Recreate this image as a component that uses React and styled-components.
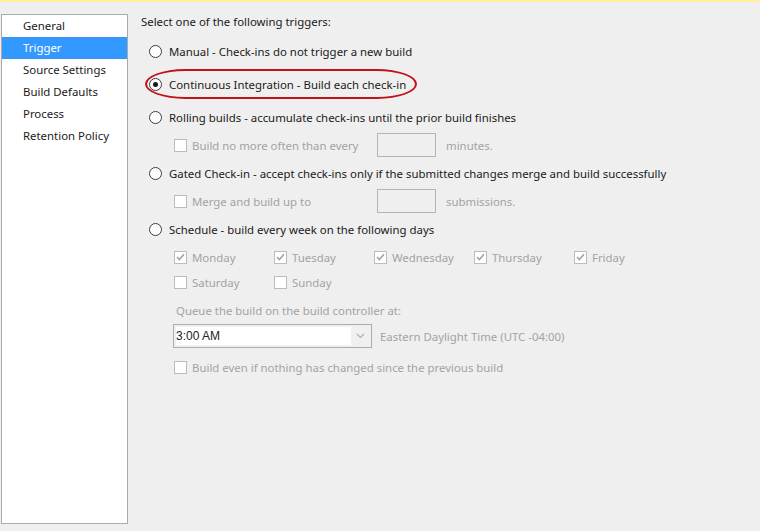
import React from "react";
import styled, { createGlobalStyle } from "styled-components";

const Global = createGlobalStyle`
  html, body { margin: 0; padding: 0; background: #efefef; }
  body { font-family: "Noto Sans", "Open Sans", sans-serif; font-size: 11.4px; color: #1a1a1a; }
  #root { width: 760px; height: 531px; overflow: hidden; }
`;

const Page = styled.div`
  width: 760px;
  height: 531px;
  display: flex;
  flex-direction: column;
  background: #efefef;
`;

const TopStrip = styled.div`
  height: 2px;
  background: #fff0a0;
`;

const Body = styled.div`
  display: flex;
  padding: 12px 0 0 1px;
  gap: 13px;
`;

const Nav = styled.ul`
  list-style: none;
  margin: 0;
  padding: 0;
  width: 125px;
  height: 508px;
  background: #fff;
  border: 1px solid #ababab;
`;

const NavItem = styled.li`
  height: 22px;
  line-height: 22px;
  padding-left: 21px;
  background: ${(p) => (p.$active ? "#3399ff" : "transparent")};
  color: ${(p) => (p.$active ? "#fff" : "#1a1a1a")};
`;

const Content = styled.div`
  display: flex;
  flex-direction: column;
`;

const Heading = styled.div`
  height: 16px;
  line-height: 16px;
`;

const Row = styled.div`
  position: relative;
  display: flex;
  align-items: center;
  height: ${(p) => p.$h || 22}px;
  margin-top: ${(p) => p.$mt || 0}px;
  padding-left: ${(p) => p.$indent || 0}px;
  color: ${(p) => (p.$disabled ? "#a3a3a3" : "#1a1a1a")};
  white-space: nowrap;
`;

const Radio = styled.span`
  box-sizing: border-box;
  width: 13px;
  height: 13px;
  border-radius: 50%;
  border: 1px solid #3c3c3c;
  background: #fff;
  margin-right: 7px;
  display: inline-flex;
  align-items: center;
  justify-content: center;
  flex: none;
  &::after {
    content: "";
    display: ${(p) => (p.$checked ? "block" : "none")};
    width: 5px;
    height: 5px;
    border-radius: 50%;
    background: #1a1a1a;
  }
`;

const Box = styled.span`
  box-sizing: border-box;
  width: 13px;
  height: 13px;
  border: 1px solid #bcbcbc;
  background: #fff;
  margin-right: 5px;
  flex: none;
  display: inline-flex;
  align-items: center;
  justify-content: center;
`;

const Highlight = styled.span`
  position: absolute;
  left: 4px;
  top: -4px;
  width: 272px;
  height: 30px;
  box-sizing: border-box;
  border: 2px solid #c1121c;
  border-radius: 40px / 15px;
  pointer-events: none;
`;

const NumInput = styled.span`
  box-sizing: border-box;
  width: 59px;
  height: 24px;
  border: 1px solid #b4b4b4;
  background: #efefef;
  flex: none;
`;

const Label = styled.span`
  width: ${(p) => (p.$w ? `${p.$w}px` : "auto")};
  flex: none;
  margin-left: ${(p) => p.$ml || 0}px;
`;

const Day = styled.span`
  display: flex;
  align-items: center;
  width: 100px;
`;

const Select = styled.div`
  box-sizing: border-box;
  width: 199px;
  height: 24px;
  border: 1px solid #acacac;
  background: #f0f0f0;
  display: flex;
  align-items: center;
  padding: 2px;
  margin-right: 8px;
`;

const SelectValue = styled.span`
  flex: 1;
  height: 100%;
  background: #fff;
  color: #222;
  font-family: "Liberation Sans", Arial, sans-serif;
  font-size: 12px;
  line-height: 18px;
`;

const Arrow = styled.span`
  width: 18px;
  display: flex;
  justify-content: center;
`;

const Check = () => (
  <svg width="9" height="8" viewBox="0 0 9 8">
    <path d="M1 4.2 L3.4 6.5 L8 1.2" fill="none" stroke="#a5a5a5" strokeWidth="1.6" />
  </svg>
);

const days1 = ["Monday", "Tuesday", "Wednesday", "Thursday", "Friday"];
const days2 = ["Saturday", "Sunday"];

export default function App() {
  return (
    <Page>
      <Global />
      <TopStrip />
      <Body>
        <Nav>
          <NavItem>General</NavItem>
          <NavItem $active>Trigger</NavItem>
          <NavItem>Source Settings</NavItem>
          <NavItem>Build Defaults</NavItem>
          <NavItem>Process</NavItem>
          <NavItem>Retention Policy</NavItem>
        </Nav>
        <Content>
          <Heading>Select one of the following triggers:</Heading>
          <Row $mt={10} $indent={8}>
            <Radio />
            Manual - Check-ins do not trigger a new build
          </Row>
          <Row $mt={11} $indent={8}>
            <Highlight />
            <Radio $checked />
            Continuous Integration - Build each check-in
          </Row>
          <Row $mt={11} $indent={8}>
            <Radio />
            Rolling builds - accumulate check-ins until the prior build finishes
          </Row>
          <Row $mt={5} $h={24} $indent={33} $disabled>
            <Box />
            <Label $w={185}>Build no more often than every</Label>
            <NumInput />
            <Label $ml={10}>minutes.</Label>
          </Row>
          <Row $mt={5} $indent={8}>
            <Radio />
            Gated Check-in - accept check-ins only if the submitted changes merge and build successfully
          </Row>
          <Row $mt={5} $h={24} $indent={33} $disabled>
            <Box />
            <Label $w={185}>Merge and build up to</Label>
            <NumInput />
            <Label $ml={10}>submissions.</Label>
          </Row>
          <Row $mt={5} $indent={8}>
            <Radio />
            Schedule - build every week on the following days
          </Row>
          <Row $mt={6} $indent={33} $disabled>
            {days1.map((d) => (
              <Day key={d}>
                <Box><Check /></Box>
                {d}
              </Day>
            ))}
          </Row>
          <Row $mt={3} $indent={33} $disabled>
            {days2.map((d) => (
              <Day key={d}>
                <Box />
                {d}
              </Day>
            ))}
          </Row>
          <Row $mt={6} $indent={35} $disabled>
            Queue the build on the build controller at:
          </Row>
          <Row $mt={3} $h={24} $indent={32} $disabled>
            <Select>
              <SelectValue>3:00 AM</SelectValue>
              <Arrow>
                <svg width="9" height="6" viewBox="0 0 9 6">
                  <path d="M1 1 L4.5 4.5 L8 1" fill="none" stroke="#b0b0b0" strokeWidth="1.2" />
                </svg>
              </Arrow>
            </Select>
            Eastern Daylight Time (UTC -04:00)
          </Row>
          <Row $mt={8} $indent={33} $disabled>
            <Box />
            Build even if nothing has changed since the previous build
          </Row>
        </Content>
      </Body>
    </Page>
  );
}
